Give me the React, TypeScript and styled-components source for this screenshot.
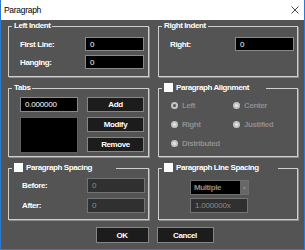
import React from 'react';
import styled, { createGlobalStyle } from 'styled-components';

const Global = createGlobalStyle`
  html, body { margin: 0; padding: 0; background: #ffffff; }
  body { font-family: "Liberation Sans", Arial, sans-serif; }
  * { box-sizing: border-box; }
`;

const FS = 8;
const LS = '-0.4px';

const Window = styled.div`
  width: 305px;
  height: 250px;
  display: flex;
  flex-direction: column;
  border: 1px solid #2b7bd4;
  border-top: none;
  background: #545454;
`;

const TitleBar = styled.div`
  height: 20px;
  background: #ffffff;
  display: flex;
  align-items: center;
  justify-content: space-between;
  padding: 0 5px 0 3px;
  font-size: 8.5px;
  letter-spacing: -0.3px;
  color: #000;
`;

const Body = styled.div`
  flex: 1;
  padding: 6px 6px 0 7px;
  display: flex;
  flex-direction: column;
`;

const Grid = styled.div`
  display: grid;
  grid-template-columns: 141px 140px;
  grid-template-rows: 51px 69px 52px;
  column-gap: 9px;
  row-gap: 11px;
`;

const Group = styled.div<{ $pt: number; $pl: number; $pr: number }>`
  position: relative;
  border: 1px solid #cfcfcf;
  box-shadow: 1px 1px 0 #8a8a8a;
  padding: ${p => p.$pt}px ${p => p.$pr}px 0 ${p => p.$pl}px;
`;

const Legend = styled.div<{ $w?: number }>`
  position: absolute;
  top: -7px;
  left: 3px;
  height: 11px;
  ${p => (p.$w ? `width: ${p.$w}px;` : '')}
  padding: 0 2px;
  background: #545454;
  display: flex;
  align-items: center;
  gap: 3px;
  color: #ffffff;
  font-weight: bold;
  font-size: ${FS}px;
  letter-spacing: ${LS};
  white-space: nowrap;
`;

const CheckBox = styled.span`
  width: 9px;
  height: 9px;
  background: #ffffff;
  flex: none;
`;

const Rows = styled.div<{ $gap: number }>`
  display: flex;
  flex-direction: column;
  gap: ${p => p.$gap}px;
`;

const Row = styled.div`
  display: flex;
  align-items: center;
  justify-content: space-between;
`;

const Label = styled.span`
  font-size: ${FS}px;
  font-weight: bold;
  letter-spacing: ${LS};
  color: #ffffff;
`;

const Field = styled.div<{ $w?: number; $h?: number; $disabled?: boolean }>`
  width: ${p => p.$w ?? 59}px;
  height: ${p => p.$h ?? 14}px;
  background: ${p => (p.$disabled ? '#303030' : '#000000')};
  border: 1px solid ${p => (p.$disabled ? '#747474' : '#8a8a8a')};
  color: ${p => (p.$disabled ? '#8c8c8c' : '#ffffff')};
  font-size: ${FS}px;
  letter-spacing: -0.2px;
  display: flex;
  align-items: center;
  padding-left: 4px;
`;

const TabsBody = styled.div`
  display: flex;
  gap: 9px;
`;

const TabList = styled.div`
  width: 58px;
  height: 36px;
  background: #000000;
  border: 1px solid #5e5e5e;
`;

const Button = styled.div<{ $w: number; $h: number }>`
  width: ${p => p.$w}px;
  height: ${p => p.$h}px;
  background: #1c1c1c;
  border: 1px solid #858585;
  color: #ffffff;
  font-size: ${FS}px;
  font-weight: bold;
  letter-spacing: ${LS};
  display: flex;
  align-items: center;
  justify-content: center;
`;

const RadioGrid = styled.div`
  display: grid;
  grid-template-columns: 62px auto;
  grid-auto-rows: 12px;
  row-gap: 7px;
`;

const RadioItem = styled.div`
  display: flex;
  align-items: center;
  gap: 4px;
  font-size: ${FS}px;
  font-weight: bold;
  letter-spacing: ${LS};
  color: #8e8e8e;
`;

const RadioDot = styled.span<{ $on?: boolean }>`
  width: 7px;
  height: 7px;
  border-radius: 50%;
  background: #c4c4c4;
  flex: none;
  display: flex;
  align-items: center;
  justify-content: center;
  &::after {
    content: '';
    width: 3px;
    height: 3px;
    border-radius: 50%;
    background: ${p => (p.$on ? '#555555' : '#e4e4e4')};
  }
`;

const Select = styled.div`
  width: 59px;
  height: 15px;
  background: #000000;
  border: 1px solid #6e6e6e;
  display: flex;
  font-size: ${FS}px;
  font-weight: bold;
  letter-spacing: ${LS};
  color: #8e8e8e;
`;

const SelectText = styled.span`
  flex: 1;
  display: flex;
  align-items: center;
  padding-left: 3px;
`;

const SelectArrow = styled.span`
  width: 8px;
  background: #676767;
  color: #8a8a8a;
  font-size: 5px;
  display: flex;
  align-items: center;
  justify-content: center;
`;

const Footer = styled.div`
  margin-top: 7px;
  display: flex;
  justify-content: center;
  padding-left: 3px;
  gap: 8px;
`;

export default function App() {
  return (
    <>
      <Global />
      <Window>
        <TitleBar>
          <span>Paragraph</span>
          <svg width="8" height="8" viewBox="0 0 8 8">
            <path d="M0.5 0.5 L7.5 7.5 M7.5 0.5 L0.5 7.5" stroke="#333" strokeWidth="0.9" />
          </svg>
        </TitleBar>
        <Body>
          <Grid>
            <Group $pt={10} $pl={11} $pr={4}>
              <Legend>Left Indent</Legend>
              <Rows $gap={4}>
                <Row>
                  <Label>First Line:</Label>
                  <Field>0</Field>
                </Row>
                <Row>
                  <Label>Hanging:</Label>
                  <Field>0</Field>
                </Row>
              </Rows>
            </Group>
            <Group $pt={10} $pl={11} $pr={3}>
              <Legend>Right Indent</Legend>
              <Rows $gap={4}>
                <Row>
                  <Label>Right:</Label>
                  <Field>0</Field>
                </Row>
              </Rows>
            </Group>

            <Group $pt={8} $pl={11} $pr={4}>
              <Legend>Tabs</Legend>
              <TabsBody>
                <Rows $gap={5}>
                  <Field $w={58} $h={15}>0.000000</Field>
                  <TabList />
                </Rows>
                <Rows $gap={5}>
                  <Button $w={57} $h={15}>Add</Button>
                  <Button $w={57} $h={15}>Modify</Button>
                  <Button $w={57} $h={15}>Remove</Button>
                </Rows>
              </TabsBody>
            </Group>
            <Group $pt={10} $pl={12} $pr={3}>
              <Legend $w={104}>
                <CheckBox />
                Paragraph Alignment
              </Legend>
              <RadioGrid>
                <RadioItem><RadioDot $on />Left</RadioItem>
                <RadioItem><RadioDot />Center</RadioItem>
                <RadioItem><RadioDot />Right</RadioItem>
                <RadioItem><RadioDot />Justified</RadioItem>
                <RadioItem><RadioDot />Distributed</RadioItem>
              </RadioGrid>
            </Group>

            <Group $pt={9} $pl={13} $pr={3}>
              <Legend $w={104}>
                <CheckBox />
                Paragraph Spacing
              </Legend>
              <Rows $gap={5}>
                <Row>
                  <Label>Before:</Label>
                  <Field $w={58} $h={15} $disabled>0</Field>
                </Row>
                <Row>
                  <Label>After:</Label>
                  <Field $w={58} $h={15} $disabled>0</Field>
                </Row>
              </Rows>
            </Group>
            <Group $pt={11} $pl={31} $pr={3}>
              <Legend $w={116}>
                <CheckBox />
                Paragraph Line Spacing
              </Legend>
              <Rows $gap={3}>
                <Select>
                  <SelectText>Multiple</SelectText>
                  <SelectArrow>▼</SelectArrow>
                </Select>
                <Field $w={58} $h={15} $disabled>1.000000x</Field>
              </Rows>
            </Group>
          </Grid>
          <Footer>
            <Button $w={53} $h={16}>OK</Button>
            <Button $w={57} $h={16}>Cancel</Button>
          </Footer>
        </Body>
      </Window>
    </>
  );
}
